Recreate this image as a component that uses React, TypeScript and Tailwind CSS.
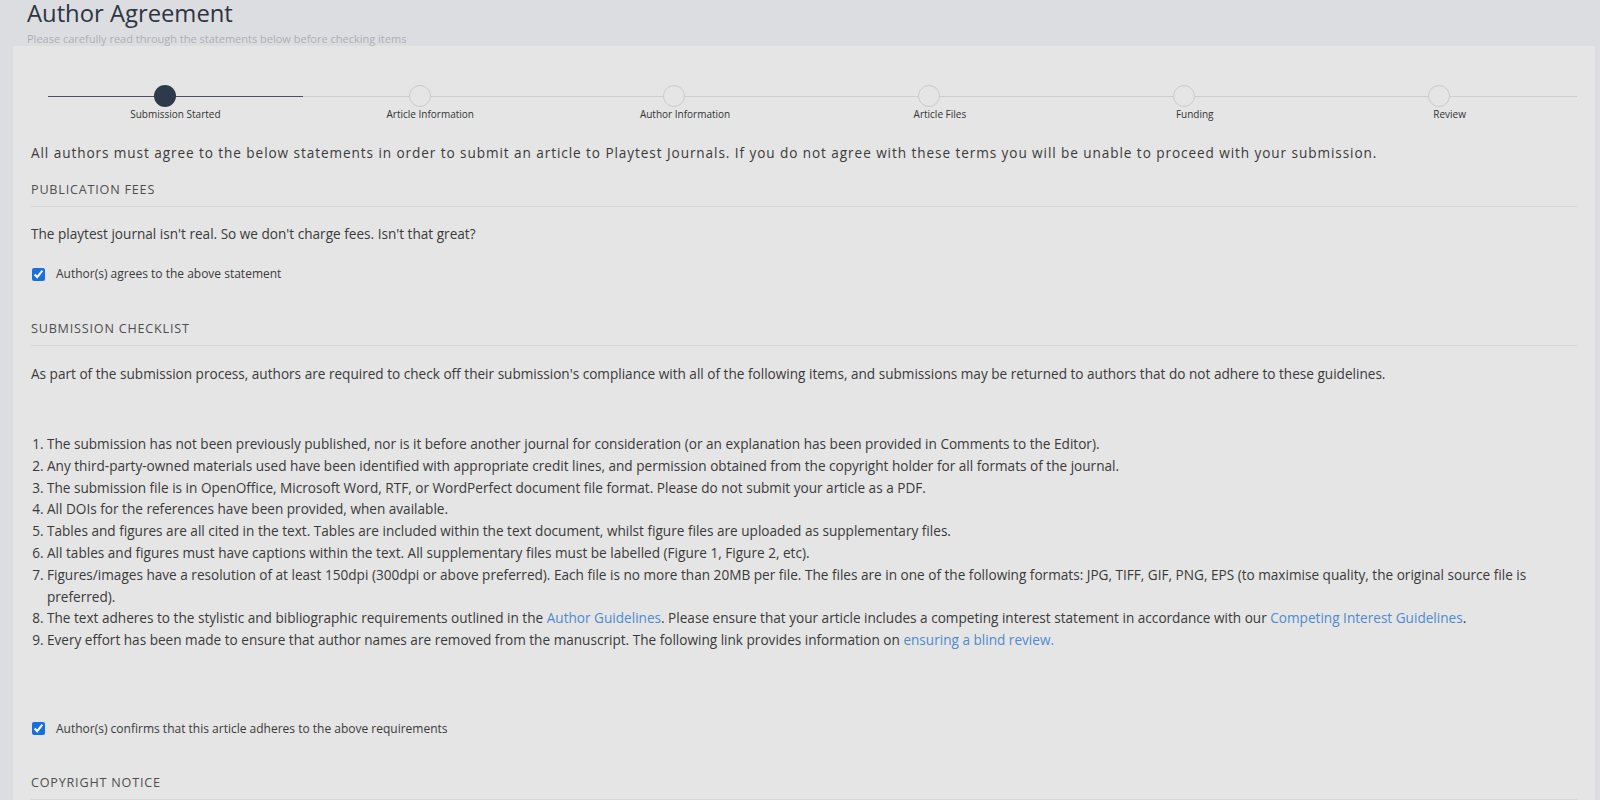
import React from "react";

const steps = [
  "Submission Started",
  "Article Information",
  "Author Information",
  "Article Files",
  "Funding",
  "Review",
];

const checklist: React.ReactNode[] = [
  "The submission has not been previously published, nor is it before another journal for consideration (or an explanation has been provided in Comments to the Editor).",
  "Any third-party-owned materials used have been identified with appropriate credit lines, and permission obtained from the copyright holder for all formats of the journal.",
  "The submission file is in OpenOffice, Microsoft Word, RTF, or WordPerfect document file format. Please do not submit your article as a PDF.",
  "All DOIs for the references have been provided, when available.",
  "Tables and figures are all cited in the text. Tables are included within the text document, whilst figure files are uploaded as supplementary files.",
  "All tables and figures must have captions within the text. All supplementary files must be labelled (Figure 1, Figure 2, etc).",
  "Figures/images have a resolution of at least 150dpi (300dpi or above preferred). Each file is no more than 20MB per file. The files are in one of the following formats: JPG, TIFF, GIF, PNG, EPS (to maximise quality, the original source file is preferred).",
  <>
    The text adheres to the stylistic and bibliographic requirements outlined in the{" "}
    <a className="text-[#4f8ad0]">Author Guidelines</a>. Please ensure that your article includes a
    competing interest statement in accordance with our{" "}
    <a className="text-[#4f8ad0]">Competing Interest Guidelines</a>.
  </>,
  <>
    Every effort has been made to ensure that author names are removed from the manuscript. The
    following link provides information on <a className="text-[#4f8ad0]">ensuring a blind review.</a>
  </>,
];

export default function App() {
  return (
    <div
      className="min-h-screen bg-[#dcdde1] text-[#3a3a3a]"
      style={{ fontFamily: '"Open Sans", "Liberation Sans", sans-serif' }}
    >
      <header className="pl-[27px]">
        <h1 className="text-[23.8px] leading-[26px] text-[#2e3542]">Author Agreement</h1>
        <p className="mt-[6px] text-[11px] leading-[14px] text-[#adafb3]">
          Please carefully read through the statements below before checking items
        </p>
      </header>

      <main className="ml-[13px] mr-[5px] bg-[#e5e5e5] px-[18px] pt-[39px] pb-10">
        <Stepper current={0} />

        <p className="mt-[21px] text-[13.6px] leading-[21px] tracking-[0.92px]">
          All authors must agree to the below statements in order to submit an article to Playtest
          Journals. If you do not agree with these terms you will be unable to proceed with your
          submission.
        </p>

        <SectionHeading className="mt-[17px]">Publication Fees</SectionHeading>
        <p className="mt-[16px] text-[13.6px] leading-[21px]">
          The playtest journal isn't real. So we don't charge fees. Isn't that great?
        </p>
        <CheckRow className="mt-[20px]">Author(s) agrees to the above statement</CheckRow>

        <SectionHeading className="mt-[35px]">Submission Checklist</SectionHeading>
        <p className="mt-[17px] text-[13.6px] leading-[21px]">
          As part of the submission process, authors are required to check off their submission's
          compliance with all of the following items, and submissions may be returned to authors that
          do not adhere to these guidelines.
        </p>

        <ol className="mt-[49px] list-decimal pl-4 text-[13.6px] leading-[21.8px]">
          {checklist.map((item, i) => (
            <li key={i}>{item}</li>
          ))}
        </ol>

        <CheckRow className="mt-[68px]">
          Author(s) confirms that this article adheres to the above requirements
        </CheckRow>

        <SectionHeading className="mt-[34px]">Copyright Notice</SectionHeading>
      </main>
    </div>
  );
}

const Stepper = ({ current }: { current: number }) => (
  <div className="ml-[17px] flex">
    {steps.map((label, i) => {
      const done = i <= current;
      return (
        <div key={label} className="flex flex-1 flex-col">
          <div className="flex h-[22px] items-center">
            <div className={`h-px w-[41.5%] ${done ? "bg-[#4b5160]" : "bg-[#cdcdcd]"}`} />
            <div
              className={`h-[22px] w-[22px] shrink-0 rounded-full ${
                i === current ? "bg-[#2e3a4b]" : "border border-[#cbcbcb] bg-[#e5e5e5]"
              }`}
            />
            <div className={`h-px flex-1 ${done ? "bg-[#4b5160]" : "bg-[#cdcdcd]"}`} />
          </div>
          <span className="text-center text-[10px] leading-[14px] text-[#333]">{label}</span>
        </div>
      );
    })}
  </div>
);

type SectionHeadingProps = { children: React.ReactNode; className?: string };
const SectionHeading = ({ children, className }: SectionHeadingProps) => (
  <h2
    className={`border-b border-[#d6d6d6] pb-[6px] text-[12.6px] leading-[20px] uppercase tracking-[0.8px] text-[#4e4e4e] ${className}`}
  >
    {children}
  </h2>
);

const CheckRow = ({ children, className }: SectionHeadingProps) => (
  <label className={`flex h-5 items-center ${className}`}>
    <input type="checkbox" defaultChecked className="m-0 ml-px h-[13px] w-[13px] accent-[#1a6fe0]" />
    <span className="ml-[11px] text-[12px] text-[#3a3a3a]">{children}</span>
  </label>
);
